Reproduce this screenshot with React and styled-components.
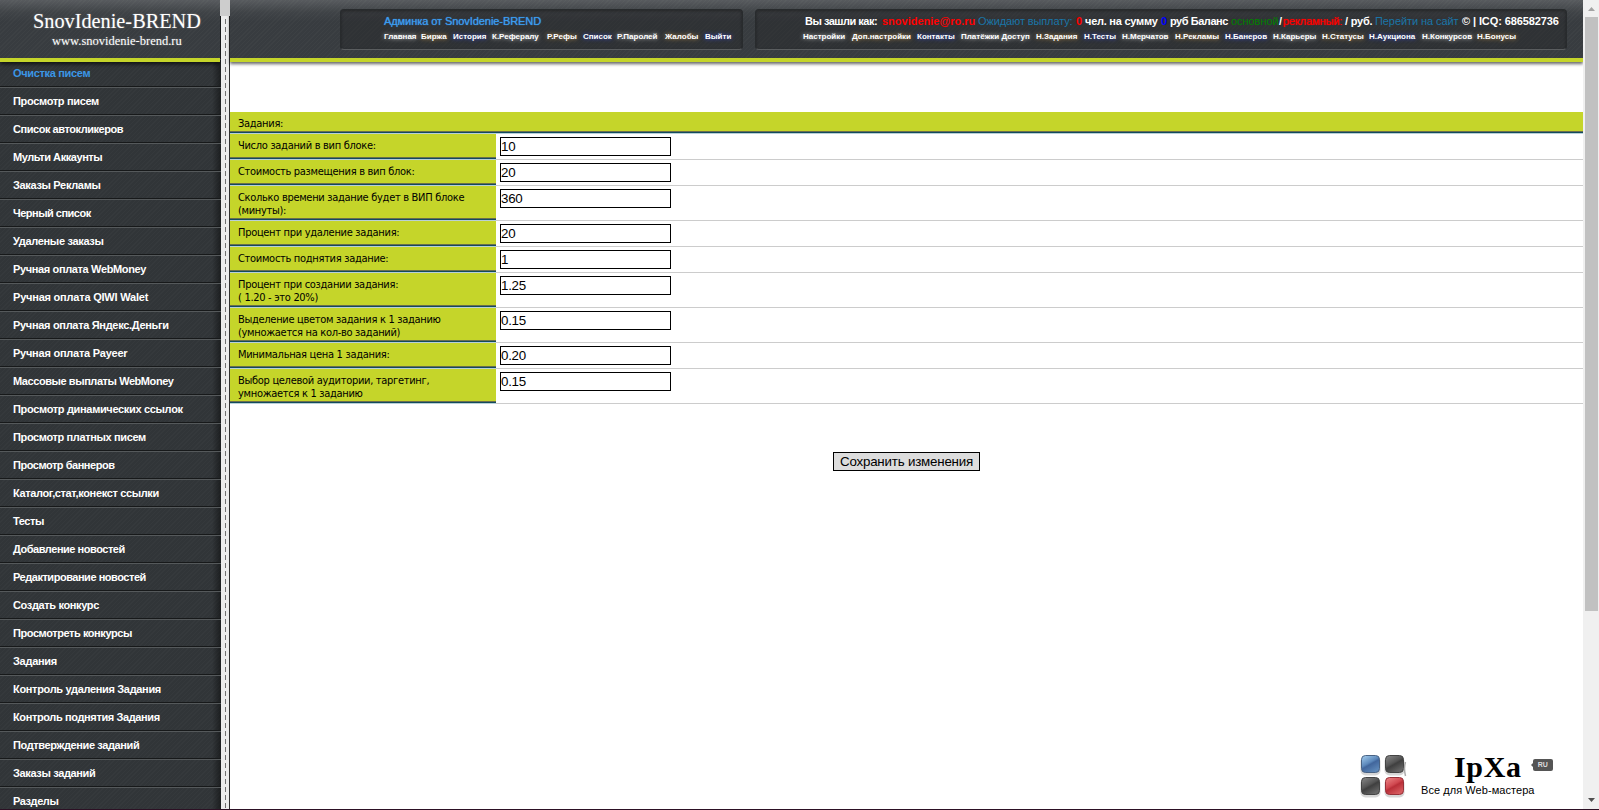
import styled, { createGlobalStyle, css } from "styled-components"

const GlobalStyle = createGlobalStyle`
    * {
        box-sizing: border-box;
    }
    body {
        margin: 0;
        background: #fff;
        overflow: hidden;
        font-family: "Liberation Sans", Arial, sans-serif;
    }
`
const stripes = css`
    background-image:
        linear-gradient(to bottom, rgba(255, 255, 255, 0.16), rgba(255, 255, 255, 0.04) 12px, transparent 22px),
        repeating-linear-gradient(135deg, rgba(255, 255, 255, 0.025) 0 1px, transparent 1px 3px);
`
const Page = styled.div`
    height: 810px;
    display: grid;
    grid-template-columns: 221px 9px 1fr 16px;
    border-bottom: 1px solid #2c1024;
    overflow: hidden;
`
const Sidebar = styled.aside`
    background-color: #313538;
    background-image:
        linear-gradient(to left, rgba(0, 0, 0, 0.45), transparent 9px),
        repeating-linear-gradient(135deg, rgba(255, 255, 255, 0.018) 0 1px, transparent 1px 3px);
    overflow: hidden;
`
const Brand = styled.div`
    position: relative;
    height: 62px;
    width: 220px;
    border-bottom: 4px solid #c5d52a;
    background-color: #383c40;
    ${stripes}
    box-shadow: 0 2px 4px rgba(0, 0, 0, 0.7);
    display: flex;
    flex-direction: column;
    color: #fff;
    font-family: "Liberation Serif", "Times New Roman", serif;
    text-shadow: 0 0 2px rgba(255, 255, 255, 0.35);
    white-space: nowrap;
`
const BrandName = styled.div`
    margin: 10px 0 0 33px;
    font-size: 20.3px;
    line-height: 23px;
`
const BrandSite = styled.div`
    margin: 0 0 0 52px;
    font-size: 12.5px;
    line-height: 16px;
`
const SideList = styled.nav`
    margin-top: -3px;
    display: flex;
    flex-direction: column;
`
const SideLink = styled.a`
    height: 28px;
    flex: none;
    padding-left: 13px;
    border-top: 1px solid #55595b;
    border-bottom: 1px solid #17191a;
    color: ${p => p.$active ? "#3b96e6" : "#fff"};
    font-size: 11px;
    font-weight: bold;
    line-height: 26px;
    letter-spacing: ${p => p.$ls - 0.03}px;
    white-space: nowrap;
`
const Splitter = styled.div`
    border-right: 1px solid #303030;
    background-color: #ececec;
    background-image:
        repeating-linear-gradient(to bottom, #ececec 0 3px, transparent 3px 8px),
        linear-gradient(to right, transparent 4px, #707070 4px 5px, transparent 5px);
`
const SplitterHandle = styled.div`
    width: 10px;
    height: 16px;
    margin-left: -1px;
    background: #cdcdcd;
    position: relative;
`
const Main = styled.main`
    min-width: 0;
`
const Header = styled.header`
    height: 62px;
    padding: 9px 0 0 110px;
    display: flex;
    gap: 12px;
    border-bottom: 4px solid #c5d52a;
    background-color: #383c40;
    ${stripes}
    box-shadow: 0 2px 3px rgba(0, 0, 0, 0.6);
`
const Panel = styled.div`
    width: ${p => p.$w}px;
    height: 41px;
    padding-left: ${p => p.$pad}px;
    border-radius: 4px;
    border: 1px solid #282b2d;
    border-bottom-color: #5a5d5f;
    background: rgba(34, 36, 38, 0.4);
    box-shadow: inset 0 1px 3px rgba(0, 0, 0, 0.35);
    white-space: nowrap;
`
const Line = styled.div`
    display: flex;
    height: 14px;
    margin-top: 4px;
    margin-left: ${p => p.$shift || 0}px;
    font-size: 11px;
    line-height: 14px;
`
const Piece = styled.span`
    flex: none;
    width: ${p => p.$w}px;
    color: ${p => p.$c || "#fff"};
    font-weight: ${p => p.$plain ? "normal" : "bold"};
    letter-spacing: ${p => p.$ls || 0}px;
    text-shadow: ${p => p.$glow ? "0 0 1px " + p.$glow : "none"};
`
const Links = styled.nav`
    display: flex;
    height: 14px;
    margin-top: 2px;
`
const TopLink = styled.a`
    flex: none;
    width: ${p => p.$w}px;
    color: #fff;
    font-size: 8px;
    font-weight: bold;
    line-height: 13px;
    text-shadow: 0 0 4px ${p => p.$glow};
`
const Table = styled.div`
    margin-top: 50px;
    font-family: "DejaVu Sans Condensed", Tahoma, sans-serif;
    font-size: 11px;
    line-height: 13px;
    letter-spacing: -0.3px;
    color: #000;
`
const labelEdge = css`
    background: #c5d52a;
    border-bottom: 1px solid #b9d0d8;
    box-shadow: inset 0 -1px 0 #134a5e, inset 0 -2px 0 #6b6f4c;
`
const TableHead = styled.div`
    height: 22px;
    padding: 5px 8px 0;
    ${labelEdge}
`
const Row = styled.div`
    display: flex;
    height: ${p => p.$tall ? 35 : 26}px;
`
const Label = styled.div`
    width: 266px;
    padding: 5px 8px 0;
    white-space: pre-line;
    ${labelEdge}
`
const Cell = styled.div`
    flex: 1;
    padding: 3px 0 0 4px;
    border-bottom: 1px solid #ccc;
`
const Input = styled.input`
    display: block;
    width: 171px;
    height: 19px;
    padding: 0;
    border: 1px solid #000;
    background: #fff;
    font: 13.33px "Liberation Sans", Arial, sans-serif;
    letter-spacing: -0.25px;
    color: #000;
`
const Actions = styled.div`
    display: flex;
    justify-content: center;
    padding-top: 48px;
`
const SaveButton = styled.button`
    width: 147px;
    height: 19px;
    padding: 0;
    border: 1px solid #000;
    border-radius: 0;
    background: #ddd;
    font: 13.33px/17px "Liberation Sans", Arial, sans-serif;
    letter-spacing: -0.2px;
    white-space: nowrap;
    color: #000;
`
const Footer = styled.footer`
    display: flex;
    justify-content: flex-end;
    padding: 281px 28px 0 0;
`
const Squares = styled.svg`
    display: block;
    flex: none;
    margin: 1px 14px 0 0;
`
const LogoText = styled.div`
    width: 134px;
`
const LogoTop = styled.div`
    display: flex;
    height: 32px;
    padding-left: 33px;
    font: bold 30px/29px "Liberation Serif", "Times New Roman", serif;
    letter-spacing: 0.7px;
    color: #000;
`
const LogoTag = styled.span`
    position: relative;
    width: 20px;
    height: 12px;
    margin: 7px 0 0 11px;
    border-radius: 2px;
    background: #555;
    color: #ddd;
    font: bold 7px/12px "Liberation Sans", Arial, sans-serif;
    letter-spacing: 0;
    text-align: center;
    &::before {
        content: "";
        position: absolute;
        left: -4px;
        top: 4px;
        border: 2px solid transparent;
        border-right-color: #555;
    }
`
const Slogan = styled.div`
    font-size: 11px;
    line-height: 13px;
    letter-spacing: 0.06px;
    color: #000;
    white-space: nowrap;
`
const Scrollbar = styled.div`
    display: flex;
    flex-direction: column;
    align-items: center;
    background: #f0f0f0;
`
const Arrow = styled.svg`
    display: block;
    flex: none;
`
const Thumb = styled.div`
    width: 13px;
    height: 594px;
    margin-bottom: auto;
    margin-left: 1px;
    background: #c1c1c1;
`

const sideItems = [
    ["Очистка писем", -0.3],
    ["Просмотр писем", -0.3],
    ["Список автокликеров", -0.42],
    ["Мульти Аккаунты", -0.4],
    ["Заказы Рекламы", -0.3],
    ["Черный список", -0.48],
    ["Удаленые заказы", -0.3],
    ["Ручная оплата WebMoney", -0.33],
    ["Ручная оплата QIWI Walet", -0.18],
    ["Ручная оплата Яндекс.Деньги", -0.28],
    ["Ручная оплата Payeer", -0.21],
    ["Массовые выплаты WebMoney", -0.4],
    ["Просмотр динамических ссылок", -0.3],
    ["Просмотр платных писем", -0.34],
    ["Просмотр баннеров", -0.44],
    ["Каталог,стат,конекст ссылки", -0.33],
    ["Тесты", -0.4],
    ["Добавление новостей", -0.44],
    ["Редактирование новостей", -0.44],
    ["Создать конкурс", -0.33],
    ["Просмотреть конкурсы", -0.4],
    ["Задания", -0.25],
    ["Контроль удаления Задания", -0.3],
    ["Контроль поднятия Задания", -0.35],
    ["Подтверждение заданий", -0.35],
    ["Заказы заданий", -0.33],
    ["Разделы", -0.4],
]

const leftLinks = [
    ["Главная", 37],
    ["Биржа", 32],
    ["История", 39],
    ["К.Рефералу", 55],
    ["Р.Рефы", 36],
    ["Список", 34],
    ["Р.Паролей", 48],
    ["Жалобы", 40],
    ["Выйти", 27],
]

const rightLinks = [
    ["Настройки", 49],
    ["Доп.настройки", 65],
    ["Контакты", 44],
    ["Платёжки Доступ", 75],
    ["Н.Задания", 48],
    ["Н.Тесты", 38],
    ["Н.Мерчатов", 53],
    ["Н.Рекламы", 50],
    ["Н.Банеров", 48],
    ["Н.Карьеры", 49],
    ["Н.Статусы", 47],
    ["Н.Аукциона", 53],
    ["Н.Конкурсов", 55],
    ["Н.Бонусы", 40],
]

const glows = ["rgba(255,255,255,.7)", "rgba(255,190,90,.7)", "rgba(60,80,255,.8)"]

const rows = [
    ["Число заданий в вип блоке:", "10"],
    ["Стоимость размещения в вип блок:", "20"],
    ["Сколько времени задание будет в ВИП блоке\n(минуты):", "360"],
    ["Процент при удаление задания:", "20"],
    ["Стоимость поднятия задание:", "1"],
    ["Процент при создании задания:\n( 1.20 - это 20%)", "1.25"],
    ["Выделение цветом задания к 1 заданию\n(умножается на кол-во заданий)", "0.15"],
    ["Минимальная цена 1 задания:", "0.20"],
    ["Выбор целевой аудитории, таргетинг,\nумножается к 1 заданию", "0.15"],
]

const tiles = [
    [2, 2, "url(#blue)", "#4a6384"],
    [26, 2, "url(#gray)", "#444"],
    [2, 24, "url(#gray)", "#444"],
    [26, 24, "url(#red)", "#963139"],
]

function LogoSquares() {
    return (
        <Squares width="48" height="46" viewBox="0 0 48 46">
            <defs>
                <linearGradient id="blue" x1="0" y1="0" x2="0.6" y2="1">
                    <stop offset="0" stopColor="#a9d2f2" />
                    <stop offset="0.5" stopColor="#5c88bb" />
                    <stop offset="0.6" stopColor="#41669c" />
                    <stop offset="1" stopColor="#5d87b8" />
                </linearGradient>
                <linearGradient id="gray" x1="0" y1="0" x2="0.6" y2="1">
                    <stop offset="0" stopColor="#8a8a8a" />
                    <stop offset="0.5" stopColor="#555" />
                    <stop offset="0.6" stopColor="#3f3f3f" />
                    <stop offset="1" stopColor="#666" />
                </linearGradient>
                <linearGradient id="red" x1="0" y1="0" x2="0.6" y2="1">
                    <stop offset="0" stopColor="#ee8a8a" />
                    <stop offset="0.5" stopColor="#d04850" />
                    <stop offset="0.6" stopColor="#b92f38" />
                    <stop offset="1" stopColor="#d65a5e" />
                </linearGradient>
            </defs>
            {tiles.map(([x, y, fill, stroke]) => (
                <g key={x + "-" + y}>
                    <rect x={x - 0.5} y={y + 1.5} width="20" height="19" rx="5" fill="#000" opacity="0.16" />
                    <rect x={x + 0.5} y={y + 0.5} width="18" height="17" rx="4" fill={fill} stroke={stroke} />
                </g>
            ))}
            <path d="M46.5 9 Q44.5 15 46.5 23" fill="none" stroke="#aaa" strokeWidth="1.5" />
        </Squares>
    )
}

export default function App() {
    return (
        <>
            <GlobalStyle />
            <Page>
                <Sidebar>
                    <Brand>
                        <BrandName>SnovIdenie-BREND</BrandName>
                        <BrandSite>www.snovidenie-brend.ru</BrandSite>
                    </Brand>
                    <SideList>
                        {sideItems.map(([text, ls], i) => (
                            <SideLink key={text} $ls={ls} $active={i === 0}>{text}</SideLink>
                        ))}
                    </SideList>
                </Sidebar>
                <Splitter>
                    <SplitterHandle />
                </Splitter>
                <Main>
                    <Header>
                        <Panel $w={403} $pad={43}>
                            <Line>
                                <Piece $w={160} $c="#3b9cf0" $plain $ls={-0.07} $glow="#3b9cf0">Админка от SnovIdenie-BREND</Piece>
                            </Line>
                            <Links>
                                {leftLinks.map(([text, w], i) => (
                                    <TopLink key={text} $w={w} $glow={glows[i % 3]}>{text}</TopLink>
                                ))}
                            </Links>
                        </Panel>
                        <Panel $w={812} $pad={47}>
                            <Line $shift={2}>
                                <Piece $w={77} $ls={-0.5}>Вы зашли как:</Piece>
                                <Piece $w={96} $c="#f00">snovidenie@ro.ru</Piece>
                                <Piece $w={98} $c="#1a75a8" $plain $ls={-0.12}>Ожидают выплату:</Piece>
                                <Piece $w={9} $c="#f00">0</Piece>
                                <Piece $w={76} $ls={-0.25}>чел. на сумму</Piece>
                                <Piece $w={9} $c="#00f">0</Piece>
                                <Piece $w={61} $ls={-0.45}>руб Баланс</Piece>
                                <Piece $w={48} $c="#008000" $plain $ls={-0.05}>основной</Piece>
                                <Piece $w={4}>/</Piece>
                                <Piece $w={62} $c="#f00" $plain $ls={-0.1} $glow="#f00">рекламный:</Piece>
                                <Piece $w={30} $ls={-0.2}>/ руб.</Piece>
                                <Piece $w={87} $c="#1a75a8" $plain $ls={-0.08}>Перейти на сайт</Piece>
                                <Piece $w={99} $ls={-0.1}>© | ICQ: 686582736</Piece>
                            </Line>
                            <Links>
                                {rightLinks.map(([text, w], i) => (
                                    <TopLink key={text} $w={w} $glow={glows[i % 3]}>{text}</TopLink>
                                ))}
                            </Links>
                        </Panel>
                    </Header>
                    <Table>
                        <TableHead>Задания:</TableHead>
                        {rows.map(([label, value]) => (
                            <Row key={label} $tall={label.includes("\n")}>
                                <Label>{label}</Label>
                                <Cell>
                                    <Input type="text" defaultValue={value} />
                                </Cell>
                            </Row>
                        ))}
                    </Table>
                    <Actions>
                        <SaveButton>Сохранить изменения</SaveButton>
                    </Actions>
                    <Footer>
                        <LogoSquares />
                        <LogoText>
                            <LogoTop>
                                IpXa
                                <LogoTag>RU</LogoTag>
                            </LogoTop>
                            <Slogan>Все для Web-мастера</Slogan>
                        </LogoText>
                    </Footer>
                </Main>
                <Scrollbar>
                    <Arrow width="16" height="17" viewBox="0 0 16 17">
                        <path d="M5 11 L8.5 7 L12 11 Z" fill="#a3a3a3" />
                    </Arrow>
                    <Thumb />
                    <Arrow width="16" height="17" viewBox="0 0 16 17">
                        <path d="M5 6 L8.5 10 L12 6 Z" fill="#505050" />
                    </Arrow>
                </Scrollbar>
            </Page>
        </>
    )
}
